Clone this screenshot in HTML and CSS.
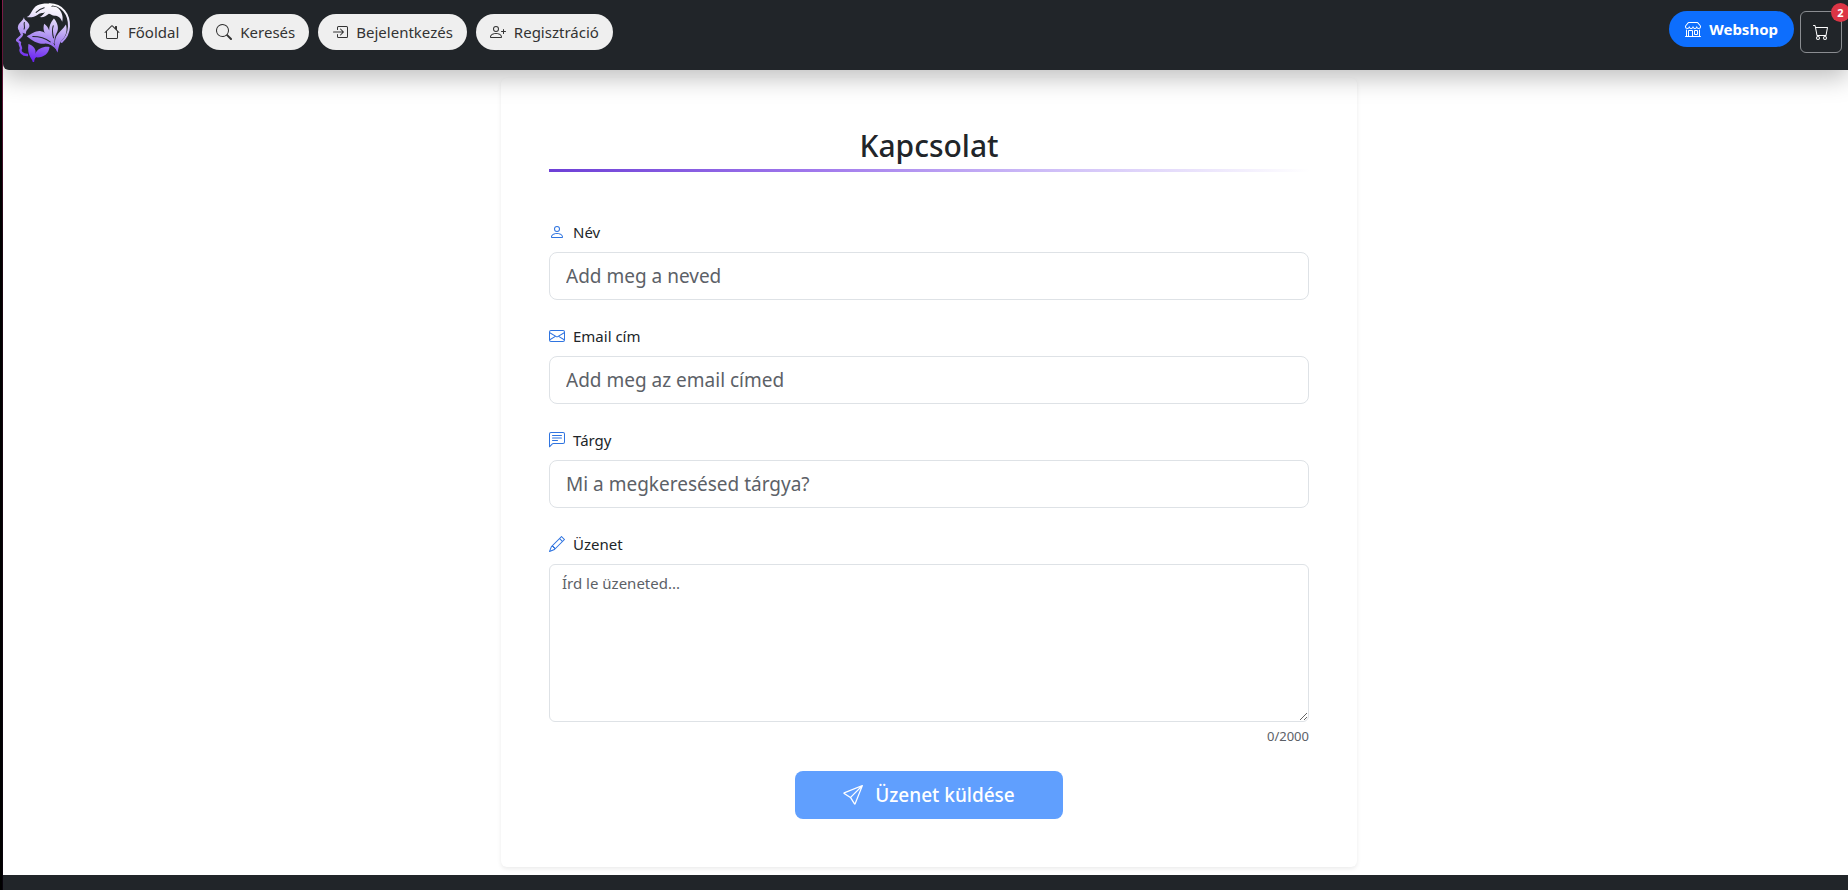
FILE: index.html
```html
<!DOCTYPE html>
<html lang="hu">
<head>
<meta charset="utf-8">
<meta name="viewport" content="width=device-width, initial-scale=1">
<title>Kapcsolat</title>
<link rel="stylesheet" href="styles.css">
</head>
<body>
<header class="navbar">
  <a class="brand" href="#" aria-label="Főoldal">
    <svg class="logo" viewBox="48 8 164 176" fill="none" aria-hidden="true">
      <defs>
        <linearGradient id="logo-fill" gradientUnits="userSpaceOnUse" x1="140" y1="8" x2="110" y2="182">
          <stop offset="0" stop-color="#ffffff"/>
          <stop offset=".2" stop-color="#eee8fb"/>
          <stop offset=".6" stop-color="#a888f0"/>
          <stop offset="1" stop-color="#6a22f0"/>
        </linearGradient>
      </defs>
      <g fill="url(#logo-fill)">
        <path d="M80 50C94 46 94 24 112 15C124 9 142 8 158 11C154 18 148 30 138 34C128 40 122 36 114 42C104 49 92 52 80 50Z"/>
        <path d="M118 50C130 46 134 32 146 22C156 16 168 18 174 24C184 34 190 48 186 64C180 50 172 46 164 46C156 46 150 40 146 40C138 46 130 52 118 50Z"/>
        <path d="M161 54C172 66 176 82 171 94C166 104 162 112 163 130C150 124 144 114 142 106C130 98 128 84 132 70C140 76 144 82 147 90C146 78 152 64 161 54Z"/>
        <path d="M197 72C202 90 197 106 187 116C178 124 176 136 172 156C162 140 162 122 168 108C176 94 188 86 197 72Z"/>
        <path d="M80 107C96 100 106 90 122 92C140 96 148 108 154 120C160 130 166 136 170 148C158 136 148 130 136 129C116 132 98 122 80 107Z"/>
        <path d="M85 130C102 136 110 148 105 160C114 142 130 137 148 139C146 160 128 172 108 170C104 173 103 177 102 184H98C97 174 80 166 85 130Z"/>
        <path d="M72 50C70 60 88 64 88 76C88 86 76 88 78 100C66 98 50 90 54 77C57 67 68 62 72 50Z"/>
      </g>
      <path d="M148 12C186 12 207 42 206 78C205 98 198 112 184 124" stroke="url(#logo-fill)" stroke-width="6" stroke-linecap="round"/>
      <path d="M60 90L66 102C64 110 54 113 51 119L60 126C57 131 62 137 63 143C58 152 66 164 84 163" stroke="url(#logo-fill)" stroke-width="7" stroke-linejoin="round"/>
      <g stroke="#212529" stroke-width="3" stroke-linecap="round">
        <path d="M108 36C116 28 124 24 132 22M159 76C155 88 156 98 160 112M98 108C116 108 134 112 150 124M73 66C70 74 76 78 72 86"/>
      </g>
    </svg>
  </a>
  <nav class="nav-links" aria-label="Fő navigáció">
    <a class="pill" href="#">
      <svg class="icon" viewBox="0 0 16 16" aria-hidden="true"><path d="M8.707 1.5a1 1 0 0 0-1.414 0L.646 8.146a.5.5 0 0 0 .708.708L2 8.207V13.5A1.5 1.5 0 0 0 3.5 15h9a1.5 1.5 0 0 0 1.5-1.5V8.207l.646.647a.5.5 0 0 0 .708-.708L13 5.793V2.5a.5.5 0 0 0-.5-.5h-1a.5.5 0 0 0-.5.5v1.293zM13 7.207V13.5a.5.5 0 0 1-.5.5h-9a.5.5 0 0 1-.5-.5V7.207l5-5z"/></svg>
      Főoldal
    </a>
    <a class="pill" href="#">
      <svg class="icon" viewBox="0 0 16 16" aria-hidden="true"><path d="M11.742 10.344a6.5 6.5 0 1 0-1.397 1.398h-.001q.044.06.098.115l3.85 3.85a1 1 0 0 0 1.415-1.414l-3.85-3.85a1 1 0 0 0-.115-.1zM12 6.5a5.5 5.5 0 1 1-11 0 5.5 5.5 0 0 1 11 0"/></svg>
      Keresés
    </a>
    <a class="pill" href="#">
      <svg class="icon" viewBox="0 0 16 16" aria-hidden="true"><path d="M5 3.500A1.500 1.500 0 0 1 6.500 2h8A1.500 1.500 0 0 1 16 3.500v9a1.500 1.500 0 0 1-1.500 1.500h-8A1.500 1.500 0 0 1 5 12.500v-2a.5.5 0 0 1 1 0v2a.5.5 0 0 0 .5.5h8a.5.5 0 0 0 .5-.5v-9a.5.5 0 0 0-.5-.5h-8a.5.5 0 0 0-.5.5v2a.5.5 0 0 1-1 0z"/><path d="M11.854 8.354a.5.5 0 0 0 0-.708l-3-3a.5.5 0 1 0-.708.708L10.293 7.500H1.500a.5.5 0 0 0 0 1h8.793l-2.147 2.146a.5.5 0 0 0 .708.708z"/></svg>
      Bejelentkezés
    </a>
    <a class="pill" href="#">
      <svg class="icon" viewBox="0 0 16 16" aria-hidden="true"><path d="M6 8a3 3 0 1 0 0-6 3 3 0 0 0 0 6m2-3a2 2 0 1 1-4 0 2 2 0 0 1 4 0m4 8c0 1-1 1-1 1H1s-1 0-1-1 1-4 6-4 6 3 6 4m-1-.004c-.001-.246-.154-.986-.832-1.664C9.516 10.68 8.289 10 6 10s-3.516.68-4.168 1.332c-.678.678-.83 1.418-.832 1.664z"/><path d="M13.5 5a.5.5 0 0 1 .5.5V7h1.5a.5.5 0 0 1 0 1H14v1.5a.5.5 0 0 1-1 0V8h-1.5a.5.5 0 0 1 0-1H13V5.5a.5.5 0 0 1 .5-.5"/></svg>
      Regisztráció
    </a>
  </nav>
  <div class="nav-shop">
    <a class="pill pill-primary" href="#">
      <svg class="icon" viewBox="0 0 16 16" aria-hidden="true"><path d="M2.97 1.35A1 1 0 0 1 3.73 1h8.54a1 1 0 0 1 .76.35l2.609 3.044A1.5 1.5 0 0 1 16 5.37v.255a2.375 2.375 0 0 1-4.25 1.458A2.37 2.37 0 0 1 9.875 8 2.37 2.37 0 0 1 8 7.083 2.37 2.37 0 0 1 6.125 8a2.37 2.37 0 0 1-1.875-.917A2.375 2.375 0 0 1 0 5.625V5.37a1.5 1.5 0 0 1 .361-.976zm1.78 4.275a1.375 1.375 0 0 0 2.75 0 .5.5 0 0 1 1 0 1.375 1.375 0 0 0 2.75 0 .5.5 0 0 1 1 0 1.375 1.375 0 1 0 2.75 0V5.37a.5.5 0 0 0-.12-.325L12.27 2H3.73L1.12 5.045A.5.5 0 0 0 1 5.37v.255a1.375 1.375 0 0 0 2.75 0 .5.5 0 0 1 1 0M1.5 8.5A.5.5 0 0 1 2 9v6h1v-5a1 1 0 0 1 1-1h3a1 1 0 0 1 1 1v5h6V9a.5.5 0 0 1 1 0v6h.5a.5.5 0 0 1 0 1H.5a.5.5 0 0 1 0-1H1V9a.5.5 0 0 1 .5-.5M4 15h3v-5H4zm5-5a1 1 0 0 1 1-1h2a1 1 0 0 1 1 1v3a1 1 0 0 1-1 1h-2a1 1 0 0 1-1-1zm3 0h-2v3h2z"/></svg>
      Webshop
    </a>
    <button class="cart" type="button" aria-label="Kosár">
      <svg class="icon" viewBox="0 0 16 16" aria-hidden="true"><path d="M0 1.5A.5.5 0 0 1 .5 1H2a.5.5 0 0 1 .485.379L2.89 3H14.5a.5.5 0 0 1 .491.592l-1.5 8A.5.5 0 0 1 13 12H4a.5.5 0 0 1-.491-.408L2.01 3.607 1.61 2H.5a.5.5 0 0 1-.5-.5M3.102 4l1.313 7h8.17l1.313-7zM5 12a2 2 0 1 0 0 4 2 2 0 0 0 0-4m7 0a2 2 0 1 0 0 4 2 2 0 0 0 0-4m-7 1a1 1 0 1 1 0 2 1 1 0 0 1 0-2m7 0a1 1 0 1 1 0 2 1 1 0 0 1 0-2"/></svg>
      <span class="badge">2</span>
    </button>
  </div>
</header>

<main class="page">
  <form class="card">
    <h1 class="title">Kapcsolat</h1>

    <div class="field">
      <label class="label" for="name">
        <svg class="icon" viewBox="0 0 16 16" aria-hidden="true"><path d="M8 8a3 3 0 1 0 0-6 3 3 0 0 0 0 6m2-3a2 2 0 1 1-4 0 2 2 0 0 1 4 0m4 8c0 1-1 1-1 1H3s-1 0-1-1 1-4 6-4 6 3 6 4m-1-.004c-.001-.246-.154-.986-.832-1.664C11.516 10.68 10.289 10 8 10s-3.516.68-4.168 1.332c-.678.678-.83 1.418-.832 1.664z"/></svg>
        Név
      </label>
      <input class="control control-lg" id="name" type="text" placeholder="Add meg a neved">
    </div>

    <div class="field">
      <label class="label" for="email">
        <svg class="icon" viewBox="0 0 16 16" aria-hidden="true"><path d="M0 4a2 2 0 0 1 2-2h12a2 2 0 0 1 2 2v8a2 2 0 0 1-2 2H2a2 2 0 0 1-2-2zm2-1a1 1 0 0 0-1 1v.217l7 4.2 7-4.2V4a1 1 0 0 0-1-1zm13 2.383-4.708 2.825L15 11.105zm-.034 6.876-5.64-3.471L8 9.583l-1.326-.795-5.64 3.47A1 1 0 0 0 2 13h12a1 1 0 0 0 .966-.741M1 11.105l4.708-2.897L1 5.383z"/></svg>
        Email cím
      </label>
      <input class="control control-lg" id="email" type="email" placeholder="Add meg az email címed">
    </div>

    <div class="field">
      <label class="label" for="subject">
        <svg class="icon" viewBox="0 0 16 16" aria-hidden="true"><path d="M14 1a1 1 0 0 1 1 1v8a1 1 0 0 1-1 1H4.414A2 2 0 0 0 3 11.586l-2 2V2a1 1 0 0 1 1-1zM2 0a2 2 0 0 0-2 2v12.793a.5.5 0 0 0 .854.353l2.853-2.853A1 1 0 0 1 4.414 12H14a2 2 0 0 0 2-2V2a2 2 0 0 0-2-2z"/><path d="M3 3.5a.5.5 0 0 1 .5-.5h9a.5.5 0 0 1 0 1h-9a.5.5 0 0 1-.5-.5M3 6a.5.5 0 0 1 .5-.5h9a.5.5 0 0 1 0 1h-9A.5.5 0 0 1 3 6m0 2.5a.5.5 0 0 1 .5-.5h5a.5.5 0 0 1 0 1h-5a.5.5 0 0 1-.5-.5"/></svg>
        Tárgy
      </label>
      <input class="control control-lg" id="subject" type="text" placeholder="Mi a megkeresésed tárgya?">
    </div>

    <div class="field">
      <label class="label" for="message">
        <svg class="icon" viewBox="0 0 16 16" aria-hidden="true"><path d="M12.146.146a.5.5 0 0 1 .708 0l3 3a.5.5 0 0 1 0 .708l-10 10a.5.5 0 0 1-.168.11l-5 2a.5.5 0 0 1-.65-.65l2-5a.5.5 0 0 1 .11-.168zM11.207 2.5 13.5 4.793 14.793 3.5 12.5 1.207zm1.586 3L10.5 3.207 4 9.707V10h.5a.5.5 0 0 1 .5.5v.5h.5a.5.5 0 0 1 .5.5v.5h.293zm-9.761 5.175-.106.106-1.528 3.821 3.821-1.528.106-.106A.5.5 0 0 1 5 12.5V12h-.5a.5.5 0 0 1-.5-.5V11h-.5a.5.5 0 0 1-.468-.325"/></svg>
        Üzenet
      </label>
      <textarea class="control" id="message" rows="6" maxlength="2000" placeholder="Írd le üzeneted..."></textarea>
      <div class="counter">0/2000</div>
    </div>

    <button class="submit" type="submit" disabled>
      <svg class="icon icon-lg" viewBox="0 0 16 16" aria-hidden="true"><path d="M15.854.146a.5.5 0 0 1 .11.54l-5.819 14.547a.75.75 0 0 1-1.329.124l-3.178-4.995L.643 7.184a.75.75 0 0 1 .124-1.33L15.314.037a.5.5 0 0 1 .54.11ZM6.636 10.07l2.761 4.338L14.13 2.576zm6.787-8.201L1.591 6.602l4.339 2.76z"/></svg>
      Üzenet küldése
    </button>
  </form>
</main>
<footer class="footer"></footer>
</body>
</html>
```
FILE: styles.css
```css
*,
*::before,
*::after {
  box-sizing: border-box;
}

html {
  background: #fff;
}

body {
  display: flex;
  flex-direction: column;
  min-height: 100vh;
  margin: 0;
  padding-left: 3px;
  overflow-x: hidden;
  background: linear-gradient(#8a2150, #1a0512 240px, #08030c) 2px 0 / 1px 100% no-repeat,
    linear-gradient(#000, #000) 0 0 / 2px 100% no-repeat;
  color: #212529;
  font-family: "Segoe UI", "Noto Sans", sans-serif;
  font-size: 15px;
  line-height: 24px;
}

a {
  color: inherit;
  text-decoration: none;
}

.icon {
  flex: none;
  width: 16px;
  height: 16px;
  fill: currentColor;
}

.icon-lg {
  width: 20px;
  height: 20px;
}

.navbar {
  position: relative;
  z-index: 1;
  display: flex;
  align-items: flex-start;
  height: 70px;
  padding: 0 6px 0 13px;
  border-radius: 0 0 0 6px;
  background: #212529;
  box-shadow: 0 8px 24px rgba(0, 0, 0, 0.25);
}

.brand {
  display: flex;
  padding-top: 3px;
  margin-right: 19px;
}

.logo {
  width: 55px;
  height: 59px;
}

.nav-links {
  display: flex;
  gap: 9px;
  padding-top: 14px;
}

.nav-shop {
  display: flex;
  align-items: flex-start;
  gap: 6px;
  padding-top: 11px;
  margin-left: auto;
}

.pill {
  display: flex;
  align-items: center;
  gap: 8px;
  height: 36px;
  padding: 0 14px;
  border-radius: 18px;
  background: #efefef;
  color: #333;
}

.pill-primary {
  padding: 0 16px;
  background: #0d6efd;
  color: #fff;
  font-weight: 700;
}

.cart {
  position: relative;
  display: flex;
  align-items: center;
  justify-content: center;
  width: 42px;
  height: 42px;
  padding: 0;
  border: 1px solid #8a8d91;
  border-radius: 6px;
  background: transparent;
  color: #fff;
  font: inherit;
}

.badge {
  position: absolute;
  top: -9px;
  right: -9px;
  width: 19px;
  height: 19px;
  border-radius: 10px;
  background: #dc3545;
  font-size: 11px;
  font-weight: 700;
  line-height: 19px;
  text-align: center;
}

.page {
  padding: 8px 0 8px 7px;
}

.card {
  max-width: 856px;
  padding: 48px;
  margin: 0 auto;
  border-radius: 6px;
  background: #fff;
  box-shadow: 0 2px 4px rgba(0, 0, 0, 0.08);
}

.title {
  padding-bottom: 3px;
  border-bottom: 3px solid;
  border-image: linear-gradient(to right, #6d3fd6, #a078ec 35%, #cdbcf7 65%, transparent) 1;
  margin: 0 0 48px;
  font-size: 30px;
  font-weight: 500;
  line-height: 40px;
  text-align: center;
}

.field {
  margin-bottom: 24px;
}

.label {
  display: flex;
  align-items: center;
  gap: 8px;
  margin-bottom: 8px;
}

.label .icon {
  color: #2f74e0;
}

.control {
  display: block;
  width: 100%;
  padding: 6px 12px;
  border: 1px solid #dee2e6;
  border-radius: 6px;
  background: #fff;
  color: #212529;
  font: inherit;
}

.control::placeholder {
  color: #5c6167;
  opacity: 1;
}

.control-lg {
  height: 48px;
  padding: 8px 16px;
  border-radius: 8px;
  font-size: 19px;
  line-height: 30px;
}

textarea.control {
  height: 158px;
  resize: vertical;
}

.counter {
  margin-top: 4px;
  color: #5c6167;
  font-size: 13px;
  line-height: 21px;
  text-align: right;
}

.submit {
  display: flex;
  align-items: center;
  justify-content: center;
  gap: 12px;
  height: 48px;
  padding: 0 48px;
  border: 0;
  border-radius: 8px;
  margin: 0 auto;
  background: #609ffe;
  color: #fff;
  font: inherit;
  font-size: 19px;
  font-weight: 500;
}

.footer {
  flex: 1;
  min-height: 14px;
  background: #212529;
}
```
